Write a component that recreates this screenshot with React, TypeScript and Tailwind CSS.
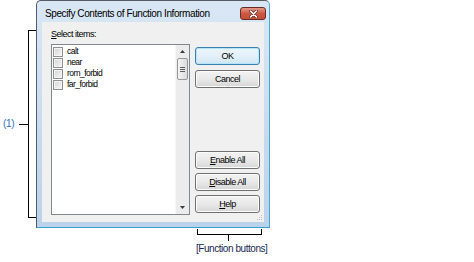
import React from "react";

const items = ["calt", "near", "rom_forbid", "far_forbid"];

function WinButton({ children, focused = false }: { children: React.ReactNode; focused?: boolean }) {
  return (
    <div
      className={
        "h-[18px] w-[65px] rounded-[3px] border flex items-center justify-center text-[9px] tracking-[-0.5px] leading-none text-black " +
        (focused
          ? "border-[#3c7fb1] bg-gradient-to-b from-[#eaf6fd] via-[#e3f0f9] to-[#cfe6f5] shadow-[inset_0_0_0_1px_#b6e3f8]"
          : "border-[#707070] bg-gradient-to-b from-[#f3f3f3] via-[#e9e9e9] to-[#d6d6d6] shadow-[inset_0_0_0_1px_#fcfcfc]")
      }
    >
      {children}
    </div>
  );
}

function CheckRow({ label }: { label: string }) {
  return (
    <div className="h-[11px] flex items-center pl-[1px]">
      <div className="w-[10px] h-[10px] border border-[#8e8f8f] bg-gradient-to-br from-[#d4d4d4] to-[#f7f7f7] shadow-[inset_0_0_0_1px_#f4f4f4]" />
      <span className="ml-[4px] text-[8.5px] tracking-[-0.55px] leading-none text-black">{label}</span>
    </div>
  );
}

function ScrollBar() {
  return (
    <div className="w-[14px] bg-[#ececec] border-l border-[#f7f7f7] flex flex-col items-center">
      <div className="h-[13px] w-full flex items-center justify-center">
        <svg width="5" height="3" viewBox="0 0 5 3">
          <path d="M0 3 L2.5 0 L5 3 Z" fill="#3a3a3a" />
        </svg>
      </div>
      <div className="h-[22px] w-[11px] rounded-[2px] border border-[#979797] bg-gradient-to-r from-[#f4f4f4] to-[#dcdcdc] flex flex-col items-center justify-center gap-[1px]">
        <div className="w-[5px] h-px bg-[#5e5e5e]" />
        <div className="w-[5px] h-px bg-[#5e5e5e]" />
        <div className="w-[5px] h-px bg-[#5e5e5e]" />
      </div>
      <div className="flex-1" />
      <div className="h-[13px] w-full flex items-center justify-center">
        <svg width="5" height="3" viewBox="0 0 5 3">
          <path d="M0 0 L2.5 3 L5 0 Z" fill="#3a3a3a" />
        </svg>
      </div>
    </div>
  );
}

function Dialog() {
  return (
    <div className="h-[228px] w-[234px] flex flex-col rounded-t-[5px] border border-[#555c66] border-r-[#4aa8d8] border-b-[#3aa0d0] bg-gradient-to-b from-[#d9e7f5] to-[#bad2ea] px-[5px] pb-[5px]">
      {/* title bar */}
      <div className="h-[21px] flex items-center justify-between pt-[4px]">
        <span className="pl-[3px] text-[10px] tracking-[-0.4px] leading-none text-black whitespace-nowrap">
          Specify Contents of Function Information
        </span>
        <div className="mr-[-2px] w-[26px] h-[13px] rounded-[3px] border border-[#6b2b25] bg-gradient-to-b from-[#e39a88] via-[#cc5843] to-[#c44e38] flex items-center justify-center">
          <svg width="9" height="8" viewBox="0 0 9 8">
            <path d="M1.5 1 L7.5 7 M7.5 1 L1.5 7" stroke="#5a2a22" strokeWidth="3" strokeLinecap="round" />
            <path d="M1.5 1 L7.5 7 M7.5 1 L1.5 7" stroke="#ffffff" strokeWidth="1.6" strokeLinecap="round" />
          </svg>
        </div>
      </div>

      {/* client area */}
      <div className="relative flex-1 bg-[#f0f0f0] flex">
        <div className="pl-[9px] pt-[6px] flex flex-col">
          <div className="h-[12px] flex items-center text-[9px] tracking-[-0.5px] leading-none text-black">
            <span className="underline underline-offset-1">S</span>elect items:
          </div>
          <div className="mt-[4px] h-[171px] w-[139px] border border-[#828790] bg-white flex">
            <div className="flex-1 pt-[1px] flex flex-col">
              {items.map((it) => (
                <CheckRow key={it} label={it} />
              ))}
            </div>
            <ScrollBar />
          </div>
        </div>
        <div className="ml-[5px] pt-[25px] pb-[9px] flex flex-col">
          <WinButton focused>OK</WinButton>
          <div className="mt-[5px]">
            <WinButton>Cancel</WinButton>
          </div>
          <div className="flex-1" />
          <div className="flex flex-col gap-[4px]">
            <WinButton>
              <span className="underline underline-offset-1">E</span>nable All
            </WinButton>
            <WinButton>
              <span className="underline underline-offset-1">D</span>isable All
            </WinButton>
            <WinButton>
              <span className="underline underline-offset-1">H</span>elp
            </WinButton>
          </div>
        </div>
        {/* size grip */}
        <svg className="absolute right-[1px] bottom-[1px]" width="6" height="6" viewBox="0 0 6 6">
          <rect x="4" y="0" width="1" height="1" fill="#c0c0c0" />
          <rect x="2" y="2" width="1" height="1" fill="#c0c0c0" />
          <rect x="4" y="2" width="1" height="1" fill="#c0c0c0" />
          <rect x="0" y="4" width="1" height="1" fill="#c0c0c0" />
          <rect x="2" y="4" width="1" height="1" fill="#c0c0c0" />
          <rect x="4" y="4" width="1" height="1" fill="#c0c0c0" />
        </svg>
      </div>
    </div>
  );
}

export default function App() {
  return (
    <div className="w-[474px] h-[262px] bg-white flex font-['Liberation_Sans',Arial,sans-serif]">
      {/* (1) annotation */}
      <div className="w-[36px] pt-[30px]">
        <div className="flex items-center">
          <span className="ml-[3px] w-[13px] text-[10px] tracking-[-0.3px] leading-none text-[#3470b8]">(1)</span>
          <div className="ml-[3px] w-[9px] h-px bg-black" />
          <div className="w-[8px] h-[188px] border-l border-t border-b border-black" />
        </div>
      </div>

      <div className="flex flex-col w-[234px]">
        <Dialog />
        {/* function buttons annotation */}
        <div className="mt-[1px] ml-[161px] w-[65px] h-[6px] border-l border-r border-b border-black" />
        <div className="ml-[192px] w-px h-[6px] bg-black" />
        <span className="mt-[2px] ml-[160px] text-[10px] tracking-[-0.45px] leading-[12px] text-[#1b2a55] whitespace-nowrap">
          [Function buttons]
        </span>
      </div>
    </div>
  );
}
